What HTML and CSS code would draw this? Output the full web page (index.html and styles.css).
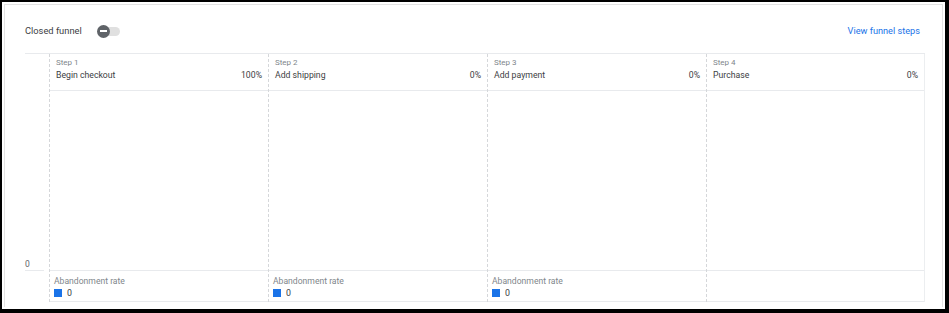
FILE: index.html
```html
<!DOCTYPE html>
<html lang="en">
<head>
    <meta charset="UTF-8">
    <meta name="viewport" content="width=device-width, initial-scale=1.0">
    <title>Checkout funnel</title>
    <link rel="stylesheet" href="styles.css">
</head>
<body>
    <div class="frame">
        <div class="card">
            <div class="top-bar">
                <div class="title-group">
                    <span class="title">Closed funnel</span>
                    <span class="toggle"><span class="toggle-track"></span><span class="toggle-knob"></span></span>
                </div>
                <a class="link" href="#">View funnel steps</a>
            </div>

            <div class="funnel">
                <div class="axis">
                    <div class="axis-head"></div>
                    <div class="axis-body"><span class="axis-label">0</span></div>
                    <div class="axis-foot"></div>
                </div>

                <div class="step">
                    <div class="step-head">
                        <div class="step-num">Step 1</div>
                        <div class="step-row"><span>Begin checkout</span><span>100%</span></div>
                    </div>
                    <div class="step-body"></div>
                    <div class="step-foot">
                        <div class="foot-label">Abandonment rate</div>
                        <div class="foot-value"><span class="swatch"></span>0</div>
                    </div>
                </div>

                <div class="step">
                    <div class="step-head">
                        <div class="step-num">Step 2</div>
                        <div class="step-row"><span>Add shipping</span><span>0%</span></div>
                    </div>
                    <div class="step-body"></div>
                    <div class="step-foot">
                        <div class="foot-label">Abandonment rate</div>
                        <div class="foot-value"><span class="swatch"></span>0</div>
                    </div>
                </div>

                <div class="step">
                    <div class="step-head">
                        <div class="step-num">Step 3</div>
                        <div class="step-row"><span>Add payment</span><span>0%</span></div>
                    </div>
                    <div class="step-body"></div>
                    <div class="step-foot">
                        <div class="foot-label">Abandonment rate</div>
                        <div class="foot-value"><span class="swatch"></span>0</div>
                    </div>
                </div>

                <div class="step last">
                    <div class="step-head">
                        <div class="step-num">Step 4</div>
                        <div class="step-row"><span>Purchase</span><span>0%</span></div>
                    </div>
                    <div class="step-body"></div>
                    <div class="step-foot"></div>
                </div>
            </div>
        </div>
    </div>
</body>
</html>
```

FILE: styles.css
```css
body {
    margin: 0;
    background: #fff;
    font-family: Roboto, "Liberation Sans", sans-serif;
    color: #3c4043;
}
.frame {
    width: 949px;
    height: 313px;
    box-sizing: border-box;
    border-style: solid;
    border-color: #000;
    border-width: 2px 4px 4px 2px;
    padding: 2px;
}
.card {
    height: 100%;
    box-sizing: border-box;
    border: 1px solid #e3e3e3;
    border-bottom: none;
    padding: 0 17px 0 20px;
}
.top-bar {
    display: flex;
    justify-content: space-between;
    align-items: center;
    height: 14px;
    padding-top: 19px;
    margin-bottom: 15px;
}
.title-group {
    display: flex;
    align-items: center;
}
.title {
    font-size: 9.3px;
    line-height: 14px;
}
.toggle {
    position: relative;
    width: 24px;
    height: 13px;
    margin-left: 15px;
}
.toggle-track {
    position: absolute; /* sits under the knob */
    left: 6px;
    top: 2px;
    width: 17px;
    height: 9px;
    border-radius: 5px;
    background: #e0e0e0;
}
.toggle-knob {
    position: absolute;
    left: 0;
    top: 0;
    width: 13px;
    height: 13px;
    border-radius: 50%;
    background: #5f6368;
}
.toggle-knob::after {
    content: "";
    position: absolute;
    left: 3px;
    top: 5.5px;
    width: 7px;
    height: 2px;
    background: #fff;
}
.link {
    font-size: 9.2px;
    line-height: 14px;
    color: #1a73e8;
    text-decoration: none;
    margin-right: 5px;
}
.funnel {
    display: grid;
    grid-template-columns: 24px repeat(4, 1fr);
    border-top: 1px solid #e8eaed;
    height: 248px;
}
.axis, .step {
    display: flex;
    flex-direction: column;
}
.axis-head, .step-head {
    height: 37px;
    box-sizing: border-box;
}
.axis-body, .step-body {
    flex: 1;
}
.axis-body {
    display: flex;
    align-items: flex-end;
    border-bottom: 1px solid #e8eaed;
    margin-right: 5px;
}
.axis-label {
    font-size: 8.5px;
    line-height: 10px;
    color: #5f6368;
    margin-bottom: 1px;
}
.axis-foot, .step-foot {
    height: 31px;
    box-sizing: border-box;
}
.step {
    border-left: 1px dashed #d5d7da;
}
.step.last {
    border-right: 1px solid #eceef0;
}
.step-head {
    padding: 4px 6px 0 6px;
    border-bottom: 1px solid #e8eaed;
}
.step-num {
    font-size: 8px;
    line-height: 10px;
    color: #80868b;
}
.step-row {
    display: flex;
    justify-content: space-between;
    font-size: 8.7px;
    line-height: 14px;
    color: #3c4043;
}
.step-body {
    border-bottom: 1px solid #e8eaed;
}
.step-foot {
    padding: 5px 4px 0 4px;
    border-bottom: 1px solid #e8eaed;
}
.foot-label {
    font-size: 8.6px;
    line-height: 11px;
    color: #80868b;
}
.foot-value {
    display: flex;
    align-items: center;
    gap: 5px;
    margin-top: 1px;
    font-size: 8.8px;
    line-height: 10px;
    color: #3c4043;
}
.swatch {
    width: 8px;
    height: 8px;
    background: #1a73e8;
}
```
